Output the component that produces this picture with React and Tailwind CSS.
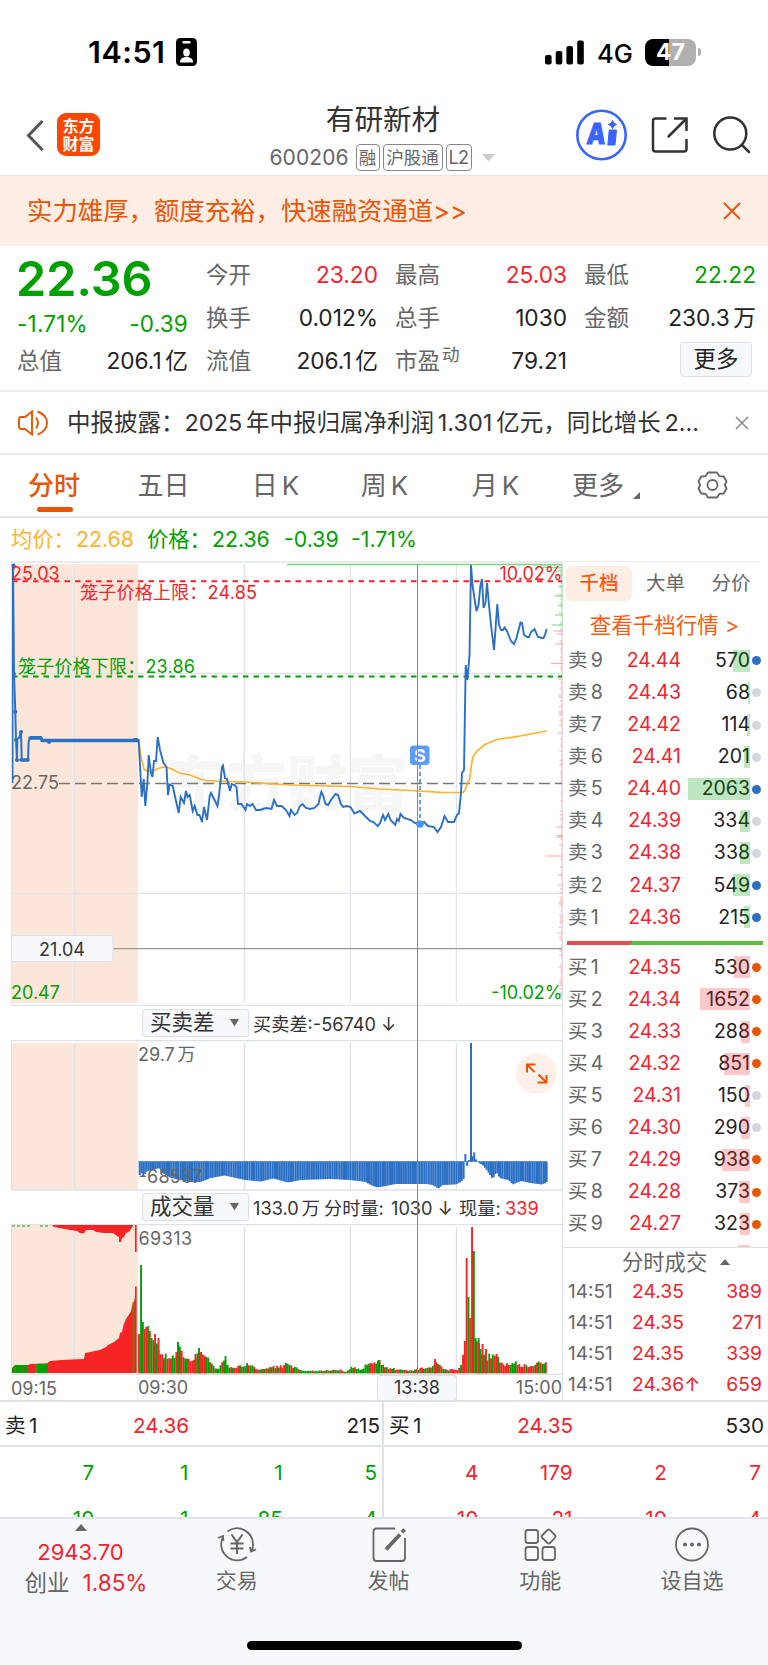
import React from 'react';

const PRICE_LINE = '138.7,740.7 141.7,797 143.7,779 145.3,806 147.5,781 148.7,755 151,773 152.5,777 154,761 156,761 157.7,737 160,750 163.5,763 166.5,767 168,795 169.5,784.5 172.7,786 176,801 178.7,813 180.7,797 184,803 186,791 187.5,797 189.7,795 192.7,811 194.7,806 197.5,815 199.5,815 202,822 204,807 207,820 209.7,796 211,793 213,797 217.5,806 219,796 222,767 223,765.5 225,778 227,779 230,791 231.7,784 234.5,785 236.5,787 238,804 241.5,804 245.5,810 247,804 250,806 252.5,804 256,810 260,810 266,808 271.5,809 274,800 277,806 281.5,806 286,810 289.5,816 291,810 294.5,815 297,813 300,806 302.5,804 306,808 310,809 314.5,808 318.5,804 320,797 321.3,792 323,795 325.5,804 328,805 331,800 335.5,794 338,795 341,804 343,807 346.7,806 350.5,807 354.5,813.5 360,811 365,816 370,821 373.5,822 377.7,826 380,823 383,815 385,820 388.3,814 390.5,820 395.3,825 397,819 398.7,821 400.5,814 404,818 411,820 415,823 420,824 424,822 428,826 434,827 437.5,832 441,827 444.5,816 448,822 454,822 457,815 459,813 461,793 462,773 463.5,771 464,770 465.7,665 467.5,680 469.5,655 471,565 472.5,585 474.7,600 476.5,611 478.5,605 480.5,585 482,579 483.5,608 485.5,603 487,583 489,605 491,625 494,650 497.3,604 499,625 501,630 503,630 504.5,627.5 507,631 511,641 514,644 516.5,638 520.5,622.5 522,623 524,635 527,637 529,637 531,632 534.5,629 538,637 542,638 543.5,638 545,635 546.7,629';

const AUCTION_LINE = '13,565 14,674 15.3,711.7 16,740 17,760 17.3,739 19,738 21,732 21.7,760 28,760 28.7,741 31,737 41,737 42,740.3 133,740.3 134,739 137,739 138.5,741';

const AVG_LINE = '138.7,740 141,757 144,769 147,771 153,771 158,768.5 163,767 167,767.5 172,769 179,773 190,775 200,779 206,780.5 215,781 245,782 290,785 350,786.5 380,789 420,791 440,792.3 463,792.5 465,790 468,782 469.5,780 471,768 472.7,757 477,751 485,744.5 497,739.5 520,736 546.7,731';

// [x, y] key points, the bars between them are interpolated
const DIFF_POINTS = [[139, 1175], [141, 1173], [143, 1178], [145, 1172], [150, 1170], [155, 1169], [158, 1168], [162, 1173], [170, 1178], [180, 1180], [190, 1182], [200, 1182], [210, 1178], [224, 1175.5], [235, 1178], [245, 1180], [260, 1181.5], [273, 1178.5], [287, 1182.5], [300, 1180], [330, 1179], [350, 1180], [365, 1182], [370, 1185], [377, 1187.5], [395, 1184], [425, 1184], [432, 1185], [437.5, 1188.5], [442, 1185], [455, 1184.5], [460, 1182], [463.9, 1178], [464, 1154], [466, 1154], [466.1, 1166], [468, 1165], [468.2, 1160], [471, 1160], [473, 1150], [475, 1159], [478, 1163], [482, 1165], [486, 1170], [492, 1179], [496, 1172], [499, 1178], [508, 1180], [512, 1184.5], [520, 1181], [530, 1183], [541, 1184.5], [545, 1183], [548, 1180]];

const VOL_POINTS = [[152, 1338], [154, 1348], [157, 1350], [162, 1357], [170, 1357], [175, 1355], [178, 1350], [182, 1352], [187, 1362], [193, 1362], [199, 1352], [203, 1357], [208, 1360], [213, 1367], [218, 1370], [223, 1363], [229, 1367], [235, 1368], [247, 1365], [255, 1368], [262, 1370], [275, 1367], [280, 1367], [286, 1365], [290, 1366], [297, 1369], [305, 1371], [320, 1371], [340, 1370], [346, 1372], [352, 1367], [360, 1370], [370, 1364], [379, 1362], [386, 1368], [400, 1370], [412, 1371], [420, 1369], [432, 1368], [437, 1363], [444, 1370], [457, 1370], [461, 1367], [463, 1355], [476, 1338], [478, 1344], [481, 1352], [484, 1352], [486, 1358], [492, 1357], [497, 1356], [500, 1364], [510, 1366], [515, 1363], [520, 1366], [530, 1366], [540, 1364], [548, 1361]];

const VOL_SPIKES = [[139, 1334, 'r'], [141, 1265, 'g'], [142.8, 1322, 'g'], [144.5, 1329, 'r'], [146.2, 1327, 'r'], [148, 1326, 'g'], [149.8, 1331, 'r'], [151.5, 1338, 'g'], [155, 1334, 'r'], [158.5, 1338, 'r'], [178, 1342, 'g'], [181, 1351, 'r'], [195.5, 1354, 'r'], [199, 1348, 'g'], [201, 1352, 'r'], [205, 1357, 'r'], [225.5, 1356, 'g'], [378.5, 1360, 'g'], [435, 1359, 'r'], [463, 1355, 'r'], [464.8, 1341, 'r'], [466.6, 1258, 'r'], [468.4, 1297, 'g'], [470.2, 1318, 'r'], [472, 1227, 'r'], [473.8, 1251, 'g'], [475.6, 1338, 'g'], [479, 1343, 'r'], [482.5, 1344, 'r'], [486, 1349, 'r'], [496.6, 1354, 'r']];

const AUCTION_VOL = '12,1373 12,1369 15,1365 28,1365 30,1364 47,1363.5 50,1361 62,1360 72,1359.5 84,1359 85,1353 90,1352 100,1350 106,1347 108,1345 114,1342 119,1338 120,1333 122,1332 123.5,1325 126,1319 130,1313 131,1311 132,1306 134,1301 135,1298 135,1286.5 136.7,1286.5 136.7,1373';

const AUCTION_TOP = '52,1225 54,1227 60,1228 64,1229 70,1230 77,1231 80,1233 84,1233.5 86,1230 93,1230 96,1232 104,1233 113,1233 117,1236 119,1237 119,1242 121,1242 122,1238 124,1237 126,1233 129,1232 131,1229 133,1226 133,1225';

const GRID_X = [74.5, 244.3, 350.4, 456.4];

const RED = '#f5222d';
const GREEN = '#00a000';
const BLUE = '#2b70c4';

function valueAt(points, x) {
  for (let i = 1; i < points.length; i++) {
    if (x <= points[i][0]) {
      const [x0, y0] = points[i - 1];
      const [x1, y1] = points[i];
      return y0 + ((y1 - y0) * (x - x0)) / (x1 - x0);
    }
  }
  return points[points.length - 1][1];
}

function noise(i) {
  const n = Math.sin(i * 127.1) * 43758.5453;
  return n - Math.floor(n);
}

// small gap between Chinese characters and latin letters / digits
function Mix({ text }) {
  const parts = text.split(/(?<=[\u4e00-\u9fa5])(?=[0-9A-Z])|(?<=[0-9A-Z])(?=[\u4e00-\u9fa5])/);
  return parts.map((p, i) => <span key={i} className={i > 0 ? 'ml-[0.16em]' : ''}>{p}</span>);
}

const sells = [
  ['卖9', '24.44', 570, 'b'],
  ['卖8', '24.43', 68, 'n'],
  ['卖7', '24.42', 114, 'n'],
  ['卖6', '24.41', 201, 'n'],
  ['卖5', '24.40', 2063, 'b'],
  ['卖4', '24.39', 334, 'n'],
  ['卖3', '24.38', 338, 'n'],
  ['卖2', '24.37', 549, 'b'],
  ['卖1', '24.36', 215, 'b'],
];

const buys = [
  ['买1', '24.35', 530, 'o'],
  ['买2', '24.34', 1652, 'o'],
  ['买3', '24.33', 288, 'o'],
  ['买4', '24.32', 851, 'o'],
  ['买5', '24.31', 150, 'n'],
  ['买6', '24.30', 290, 'n'],
  ['买7', '24.29', 938, 'o'],
  ['买8', '24.28', 373, 'o'],
  ['买9', '24.27', 323, 'o'],
];

const deals = [
  ['24.35', 389],
  ['24.35', 271],
  ['24.35', 339],
  ['24.36↑', 659],
];

const dotColor = { b: 'bg-[#2b70c4]', n: 'bg-[#d3d6de]', o: 'bg-[#ea5504]' };

function StatusBar() {
  return (
    <div className="flex h-[100px] shrink-0 items-start justify-between pl-[88px] pr-[67px] pt-[37px] text-black">
      <div className="flex h-[30px] items-center">
        <span className="w-[88px] text-[30.500px] font-semibold leading-none tracking-[0.500px]">14:51</span>
        <svg width="21" height="28" viewBox="0 0 21 28">
          <rect width="21" height="28" rx="4.5" fill="#000" />
          <rect x="6.5" y="3" width="8" height="2.5" rx="1.2" fill="#fff" />
          <ellipse cx="10.5" cy="14.5" rx="3.3" ry="3.9" fill="#fff" />
          <path d="M4 24.5c0-4 3-5.5 6.500-5.500s6.500 1.500 6.500 5.500z" fill="#fff" />
        </svg>
      </div>
      <div className="flex h-[30px] items-center">
        <svg width="39" height="25" viewBox="0 0 39 25">
          <rect x="0" y="15" width="6.600" height="9.500" rx="2" />
          <rect x="10.700" y="11" width="6.600" height="13.500" rx="2" />
          <rect x="21.400" y="6" width="6.600" height="18.500" rx="2" />
          <rect x="32.200" y="0.500" width="6.600" height="24" rx="2" />
        </svg>
        <span className="ml-[13px] w-[48px] pt-[3px] text-[25.500px] font-medium leading-none tracking-[-0.1px]">4G</span>
        <div className="flex h-[27px] w-[51px] items-center justify-center rounded-[8px] bg-[linear-gradient(90deg,#000_47%,#b0b0b0_47%)] text-[23px] font-bold leading-none text-white">
          47
        </div>
        <div className="ml-[2px] h-[8px] w-[3px] rounded-r-full bg-[#b0b0b0]" />
      </div>
    </div>
  );
}

function Header() {
  return (
    <div className="flex h-[75px] shrink-0 items-start">
      <div className="flex w-[218px] pl-[26px] pt-[13px]">
        <svg className="mt-[7px]" width="18" height="31" viewBox="0 0 18 31" fill="none" stroke="#555" strokeWidth="3">
          <path d="M16.500 1 2.500 15.500 16.500 30" />
        </svg>
        <div className="ml-[13px] flex h-[43px] w-[43px] flex-col items-center justify-center rounded-[9px] bg-[#ff4600] text-[16px] font-bold leading-[18px] text-white">
          <span>东方</span>
          <span>财富</span>
        </div>
      </div>
      <div className="flex w-[330px] flex-col items-center">
        <div className="mt-[4px] text-[28.600px] leading-[32px] text-[#333]">有研新材</div>
        <div className="mt-[8px] flex items-center pr-[2px] text-[17.500px] leading-none text-[#666]">
          <span className="mr-[6px] w-[80px] text-[21px] tracking-[0.100px]">600206</span>
          <span className="flex h-[27px] w-[24px] items-center justify-center rounded-[4px] border border-[#888]">融</span>
          <span className="ml-[3px] flex h-[27px] w-[60px] items-center justify-center rounded-[4px] border border-[#888]">沪股通</span>
          <span className="ml-[3px] flex h-[27px] w-[26px] items-center justify-center rounded-[4px] border border-[#888] text-[18px] tracking-[-0.5px]">L2</span>
          <svg className="ml-[10px]" width="13" height="8" viewBox="0 0 13 8">
            <path d="M0 0h13L6.500 7.500z" fill="#ccc" />
          </svg>
        </div>
      </div>
      <div className="flex w-[220px] items-center pl-[28px] pt-[9px]">
        <svg width="51" height="52" viewBox="0 0 51 52">
          <circle cx="25.500" cy="26" r="24.200" fill="none" stroke="#3964fe" strokeWidth="2.600" />
          <text x="13" y="35.500" transform="skewX(-5)" fontSize="29" fontWeight="900" fill="#3964fe" stroke="#3964fe" strokeWidth="0.800" textLength="19" lengthAdjust="spacingAndGlyphs">A</text>
          <path d="M33.300 21h7.200l-1.500 15h-7.200z" fill="#3964fe" stroke="#3964fe" strokeLinejoin="round" />
          <path d="M36.500 11.500q.9 3.200 4 4-3.100.9-4 4-.9-3.100-4-4 3.100-.8 4-4z" fill="#3964fe" stroke="#3964fe" strokeLinejoin="round" />
        </svg>
        <svg className="ml-6" width="38" height="38" viewBox="0 0 38 38" fill="none" stroke="#333" strokeWidth="2.500" strokeLinecap="round">
          <path d="M14.500 2.500H4.500a2.500 2.500 0 0 0-2.500 2.500V33a2.500 2.500 0 0 0 2.500 2.500H33a2.500 2.500 0 0 0 2.500-2.500V24" />
          <path d="M24 2.500h11.500V14M35 3 17.500 20.500" />
        </svg>
        <svg className="ml-[24px]" width="38" height="38" viewBox="0 0 38 38" fill="none" stroke="#333" strokeWidth="2.500" strokeLinecap="round">
          <circle cx="17.300" cy="17.500" r="16" />
          <path d="M29 29 36 36" />
        </svg>
      </div>
    </div>
  );
}

function Banner() {
  return (
    <div className="flex h-[71px] shrink-0 items-center justify-between border-t border-[#e8e4e2] bg-[#feede4] pl-[27px] pr-[27px] text-[#ea5504]">
      <span className="text-[25.400px] leading-none">实力雄厚，额度充裕，快速融资通道&gt;&gt;</span>
      <svg width="18" height="18" viewBox="0 0 18 18" stroke="currentColor" strokeWidth="1.800">
        <path d="M1 1 17 17M17 1 1 17" />
      </svg>
    </div>
  );
}

function Stat({ label, sup, value, color = 'text-[#222]' }) {
  return (
    <div className="flex h-[43px] items-center justify-between whitespace-nowrap leading-none">
      <span className="text-[22.500px] text-[#666]">
        {label}
        {sup && <sup className="ml-[2px] text-[17.500px]">{sup}</sup>}
      </span>
      <span className={`text-[22.700px] ${color}`}><Mix text={value} /></span>
    </div>
  );
}

function Quote() {
  return (
    <div className="flex h-[146px] shrink-0 border-b-2 border-[#eee] pl-[17px] pr-[12px] pt-[8px]">
      <div className="w-[171px] text-[#00a000]">
        <div className="flex h-[51px] items-center text-[48.500px] font-semibold leading-none">
          <span className="-ml-px">22.36</span>
        </div>
        <div className="-mt-[2px] flex h-[43px] items-center justify-between text-[22.500px] leading-none tracking-[0.200px]">
          <span>-1.71%</span>
          <span>-0.39</span>
        </div>
        <div className="-mt-[6px]">
          <Stat label="总值" value="206.1亿" />
        </div>
      </div>
      <div className="ml-[18px] w-[172px]">
        <Stat label="今开" value="23.20" color="text-[#f5222d]" />
        <Stat label="换手" value="0.012%" />
        <Stat label="流值" value="206.1亿" />
      </div>
      <div className="ml-[17px] w-[172px]">
        <Stat label="最高" value="25.03" color="text-[#f5222d]" />
        <Stat label="总手" value="1030" />
        <Stat label="市盈" sup="动" value="79.21" />
      </div>
      <div className="ml-[17px] w-[172px]">
        <Stat label="最低" value="22.22" color="text-[#00a000]" />
        <Stat label="金额" value="230.3万" />
        <div className="flex h-[39px] items-center justify-end pr-[4px]">
          <button className="h-[35px] w-[72px] rounded-[4px] border border-[#dcdfe4] bg-[#f7f8fb] text-[22.500px] leading-none text-[#222]">更多</button>
        </div>
      </div>
    </div>
  );
}

function News() {
  return (
    <div className="flex h-[63px] shrink-0 items-center border-b-2 border-[#eee] pl-[18px] pr-[19px]">
      <svg width="31" height="26" viewBox="0 0 31 26" fill="none" stroke="#ea5504" strokeWidth="1.900">
        <path d="M14 1.500v23L7 19H3a2 2 0 0 1-2-2V9a2 2 0 0 1 2-2h4zM18 7.500q4 5.500 0 11M19.500 1.500Q29 5 29 13t-9.500 11.500" />
      </svg>
      <span className="ml-[18px] flex-1 whitespace-nowrap text-[23.500px] leading-none text-[#333]">
        <Mix text="中报披露：2025年中报归属净利润1.301亿元，同比增长2..." />
      </span>
      <svg width="14" height="14" viewBox="0 0 14 14" stroke="#888" strokeWidth="1.500">
        <path d="M1 1 13 13M13 1 1 13" />
      </svg>
    </div>
  );
}

function Tabs() {
  return (
    <div className="flex h-[63px] shrink-0 border-b-2 border-[#e3e3ec] text-[26px] leading-[61px] text-[#666]">
      <div className="relative w-[109px] pl-[28px] font-medium text-[#ea5504]">
        分时
        <div className="absolute bottom-[4px] left-[37px] h-[5px] w-[36px] rounded-full bg-[#ea5504]" />
      </div>
      <div className="w-[109px] text-center">五日</div>
      <div className="w-[115px] text-center"><Mix text="日K" /></div>
      <div className="w-[103px] text-center"><Mix text="周K" /></div>
      <div className="w-[119px] text-center"><Mix text="月K" /></div>
      <div className="flex w-[110px] items-center pl-[17px]">
        更多
        <svg className="ml-[9px] mt-5" width="7" height="7" viewBox="0 0 7 7">
          <path d="M7 0v7H0z" fill="#666" />
        </svg>
      </div>
      <svg className="ml-[32px] mt-[16px]" width="31" height="28" viewBox="0 0 31 28" fill="none" stroke="#666" strokeWidth="1.800">
        <path d="M11 1.500h9l2.500 3.700 4.300.3 2.700 5-1.700 3.500 1.700 3.500-2.700 5-4.300.3-2.500 3.700h-9l-2.500-3.700-4.300-.3-2.700-5L3.200 14 1.500 10.500l2.700-5 4.300-.3z" strokeLinejoin="round" />
        <circle cx="15.500" cy="14" r="5" />
      </svg>
    </div>
  );
}

function PriceChart() {
  const ticks = [];
  for (let i = 0; i < 218; i++) {
    ticks.push([565 + i * 2, 1 + noise(i) * noise(i + 9) * 4]);
  }
  const longTicks = [[565, 29], [567.5, 20], [571, 8], [575, 6], [586, 4], [596, 8], [605.7, 5], [615, 8], [625, 11], [631, 9], [634, 6], [644, 7], [663.5, 11.5], [712, 4], [760, 3], [827, 7], [835.5, 5.5], [837, 6], [856, 17], [875, 4]];
  return (
    <svg className="shrink-0" width="563" height="445" viewBox="0 561 563 445">
      <rect x="11" y="564" width="127" height="439" fill="#fce6d9" />
      <g stroke="#e1e5eb" strokeWidth="1.300">
        <path d="M11 562H563M11 1005.500H563M11.500 562V1005M562.500 562V1006" />
        <path d="M11 673.700H562M11 893.300H562" />
        {GRID_X.map((x) => <path key={x} d={`M${x} 564V1003`} />)}
      </g>
      <text x="166" y="806" fontSize="60.500" fontWeight="900" fill="#f6f6f7">东方财富</text>
      <path d="M244.300 750V820M350.400 750V820" stroke="#e1e5eb" strokeWidth="1.300" />
      <path d="M287 564.500H562" stroke="#7fd67f" strokeWidth="1.300" />
      {ticks.concat(longTicks).map(([y, w], i) => (
        <path key={i} d={`M${562.5 - w} ${y}H562.500`} stroke={y < 630 ? '#8bd98b' : '#fbaeb2'} strokeWidth="1.100" />
      ))}
      <path d="M12 581.300H562" stroke={RED} strokeWidth="1.900" strokeDasharray="5.500 5" />
      <path d="M12 676.500H562" stroke={GREEN} strokeWidth="1.900" strokeDasharray="5.500 5" />
      <path d="M59 783.500H562" stroke="#777" strokeWidth="1.400" strokeDasharray="11 5" />
      <path d="M113 948.700H562" stroke="#999" strokeWidth="1.200" />
      <polyline points={AVG_LINE} fill="none" stroke="#fdb32b" strokeWidth="1.700" />
      <path d="M12.700 565V783" stroke={BLUE} strokeWidth="1.500" />
      <polyline points={AUCTION_LINE} fill="none" stroke={BLUE} strokeWidth="2" strokeLinejoin="round" />
      <path d="M30 738h11M42 740.500h96M21 760h7" stroke={BLUE} strokeWidth="3.600" strokeLinecap="round" />
      {[[13.5, 565.5], [14, 674], [15.3, 711.7], [17, 760], [21, 732], [16, 740], [49, 742]].map(([x, y]) => (
        <circle key={x} cx={x} cy={y} r="2" fill={BLUE} />
      ))}
      <polyline points={PRICE_LINE} fill="none" stroke={BLUE} strokeWidth="1.900" />
      <path d="M420 765V820" stroke="#5a9df8" strokeWidth="1.900" strokeDasharray="4 3" />
      <circle cx="420" cy="824" r="3.800" fill="#4a93f8" />
      <rect x="410" y="745.500" width="19.500" height="19.500" rx="3.500" fill="#5a9df8" />
      <text x="419.800" y="761.500" fontSize="18" fontWeight="700" fill="#fff" textAnchor="middle">S</text>
      <g fontSize="18">
        <text x="11" y="580" fill={RED}>25.03</text>
        <text x="80" y="599" fill={RED} textLength="177">笼子价格上限：24.85</text>
        <text x="18" y="673.300" fill={GREEN} textLength="177">笼子价格下限：23.86</text>
        <text x="11" y="789" fill="#666">22.75</text>
        <text x="11" y="999" fill={GREEN}>20.47</text>
        <text x="562.500" y="579.500" fill={RED} textAnchor="end">10.02%</text>
        <text x="562.500" y="999" fill={GREEN} textAnchor="end">-10.02%</text>
        <rect x="11.500" y="935.500" width="101.500" height="26" rx="2.500" fill="#f7f8fb" stroke="#dcdfe6" />
        <text x="62" y="955.500" fill="#333" textAnchor="middle">21.04</text>
      </g>
    </svg>
  );
}

function DiffChart() {
  const bars = [];
  for (let x = 139; x < 547; x += 1.77) {
    const y = valueAt(DIFF_POINTS, x);
    bars.push(
      <path key={x} d={`M${x + 0.7} 1161.500V${y}`} stroke={BLUE} strokeWidth={noise(x) > 0.6 ? 1.7 : 2} />
    );
  }
  return (
    <svg className="shrink-0" width="563" height="151" viewBox="0 1040 563 151">
      <rect x="11" y="1043" width="127" height="146" fill="#fce6d9" />
      <g stroke="#dde2e9" strokeWidth="1.300">
        <path d="M11 1040.700H563M11 1190H563M11.500 1040V1190M562.500 1040V1191" />
        {GRID_X.map((x) => <path key={x} d={`M${x} 1043V1189`} />)}
      </g>
      <path d="M138 1161.500H547" stroke="#8ab0dd" />
      {bars}
      <path d="M471 1161.500V1043" stroke={BLUE} strokeWidth="2" />
      <g fontSize="18" fill="#666">
        <text x="138" y="1060.500">29.7</text>
        <text x="177.500" y="1060.500">万</text>
        <text x="138.500" y="1183" textLength="64">-68537</text>
      </g>
      <circle cx="536.300" cy="1073.300" r="20.500" fill="#feefe8" />
      <path d="M527 1072.500V1064.500H535.500M527.500 1065 534.500 1072M546.500 1075V1082.500H537.500M546 1082 538.500 1074.500" fill="none" stroke="#ea5504" strokeWidth="2" />
    </svg>
  );
}

function VolumeChart() {
  const bars = [];
  for (let x = 153.3; x < 547; x += 1.768) {
    const n = noise(x);
    const base = valueAt(VOL_POINTS, x);
    const y = base + (n - 0.65) * (1373 - base) * 0.55;
    if (x > 462 && x < 476) continue;
    bars.push(
      <rect key={x} x={x - 0.9} y={y} width="1.900" height={1373.3 - y} fill={noise(x * 3) > (x < 240 || x > 420 ? 0.5 : 0.38) ? GREEN : '#f62424'} />
    );
  }
  return (
    <svg className="shrink-0" width="563" height="151" viewBox="0 1224 563 151">
      <rect x="11" y="1225" width="127" height="148" fill="#fce6d9" />
      <g stroke="#dde2e9" strokeWidth="1.300">
        <path d="M11 1224.700H563M11 1374.300H563M11.500 1224V1375M562.500 1224V1375" />
        {GRID_X.map((x) => <path key={x} d={`M${x} 1227V1373`} />)}
      </g>
      <polygon points={AUCTION_VOL} fill="#f62424" />
      <path d="M12 1373V1368L15 1365H28V1373z" fill={GREEN} />
      <path d="M15 1373V1366M22 1373V1366" stroke="#8a6a10" strokeWidth="1.500" />
      <rect x="38" y="1363.700" width="9.500" height="9.500" fill={GREEN} />
      <path d="M36.500 1373V1364M133.500 1373V1302" stroke="#5a8a10" strokeWidth="1.800" />
      <polygon points={AUCTION_TOP} fill="#f62424" />
      <path d="M135.800 1225V1252" stroke="#f62424" strokeWidth="1.700" />
      <path d="M12 1226H30M40 1226H48" stroke={GREEN} strokeWidth="1.500" strokeDasharray="3 2" opacity="0.600" />
      {bars}
      {VOL_SPIKES.map(([x, y, c]) => (
        <rect key={x} x={x - 0.9} y={y} width="1.900" height={1373.3 - y} fill={c === 'r' ? '#f62424' : GREEN} />
      ))}
      <text x="138.500" y="1244.500" fontSize="18" fill="#666" textLength="53.500">69313</text>
    </svg>
  );
}

function IndicatorRow({ name, children }) {
  return (
    <div className="flex h-[34px] shrink-0 items-center border-r border-[#e1e5eb] pl-[142px] text-[18.200px] leading-none text-[#333]">
      <div className="flex h-[28px] w-[107px] items-center justify-between rounded-[3px] border border-[#dcdfe6] bg-[#f7f8fb] pl-[7px] pr-[9px] text-[21.500px]">
        {name}
        <svg width="9" height="8" viewBox="0 0 9 8">
          <path d="M0 0h9L4.500 7.500z" fill="#666" />
        </svg>
      </div>
      <div className="ml-[4px] mt-[2px] flex whitespace-nowrap">{children}</div>
    </div>
  );
}

function Charts() {
  return (
    <div className="relative flex w-[563px] shrink-0 flex-col">
      <PriceChart />
      <IndicatorRow name="买卖差">买卖差:-56740 ↓</IndicatorRow>
      <DiffChart />
      <div className="-mt-px flex flex-col">
        <IndicatorRow name="成交量">
          <span className="w-[71px]"><Mix text="133.0万" /></span>
          <span className="w-[67px]">分时量:</span>
          <span className="w-[68px]">1030 ↓</span>
          <span className="w-[46px]">现量:</span>
          <span className="text-[#f5222d]">339</span>
        </IndicatorRow>
      </div>
      <VolumeChart />
      <div className="flex h-[26px] items-center border-r border-[#e1e5eb] pl-[11px] text-[18px] leading-none text-[#666]">
        <span className="h-full w-[127px] border-r border-[#eef0f3] pt-[5px]">09:15</span>
        <span className="w-[239px]">09:30</span>
        <span className="flex h-[26px] w-[80px] items-center justify-center rounded-[3px] border border-[#dcdfe6] bg-[#f7f8fb] text-[#333]">13:38</span>
        <span className="flex-1 text-right">15:00</span>
      </div>
      <div className="absolute left-[417px] top-[3px] h-[810px] w-px bg-[#888]" />
    </div>
  );
}

function BookRow({ row, side }) {
  const [label, price, vol, dot] = row;
  return (
    <div className="flex h-[32.100px] items-center pl-[5px] text-[19.500px] leading-none">
      <span className="w-[43px] text-[#666]">
        <Mix text={label} />
      </span>
      <span className="w-[70px] text-right text-[#f5222d]">{price}</span>
      <div className="relative flex h-[22px] w-[69px] items-center justify-end">
        <span className="text-[#222]">{vol}</span>
        <div
          className={`absolute right-0 top-0 h-full ${side === 'sell' ? 'bg-[#00a000]/25' : 'bg-[#f5222d]/25'}`}
          style={{ width: vol / 33 }}
        />
      </div>
      <span className={`ml-[2px] size-[9px] rounded-full ${dotColor[dot]}`} />
    </div>
  );
}

function OrderBook() {
  return (
    <div className="flex w-[205px] shrink-0 flex-col">
      <div className="mr-[8px] flex h-[41px] items-center border-t border-[#e8eaee] pl-[3px] pt-[3px] text-[19.500px] leading-none text-[#666]">
        <span className="flex h-[35px] w-[66px] items-center justify-center rounded-[6px] bg-[#feede4] font-medium text-[#fb5a0c]">千档</span>
        <span className="w-[66px] pl-[1px] text-center">大单</span>
        <span className="flex-1 pl-[4px] text-center">分价</span>
      </div>
      <div className="flex h-[43px] items-center justify-center pr-0.5 pt-[5px] text-[21.500px] leading-none text-[#fb5a0c]">
        查看千档行情&nbsp;&gt;
      </div>
      {sells.map((r) => <BookRow key={r[0]} row={r} side="sell" />)}
      <div className="ml-[4px] mr-[5px] mt-[7.500px] h-[4.500px] shrink-0 bg-[linear-gradient(120deg,#e84b4b_33%,#5bbf3f_33%)]" />
      <div className="mt-[6px]">
        {buys.map((r) => <BookRow key={r[0]} row={r} side="buy" />)}
      </div>
      <div className="mr-[18px] mt-[5px] h-[2px] w-[12px] self-end bg-[#f5222d]/25" />
      <div className="flex h-[29px] items-center border-t border-[#dcdfe6] pl-[59px] text-[21.300px] leading-none text-[#666]">
        分时成交
        <svg className="ml-[13px]" width="10" height="6" viewBox="0 0 10 6">
          <path d="M5 0 10 6H0z" fill="#666" />
        </svg>
      </div>
      {deals.map(([price, vol], i) => (
        <div key={i} className="flex h-[31px] items-center pl-[5px] pr-[6px] text-[19.300px] leading-none text-[#f5222d]">
          <span className="w-[64px] text-[19px] text-[#666]">14:51</span>
          <span className="flex-1">{price}</span>
          <span>{vol}</span>
        </div>
      ))}
    </div>
  );
}

function DepthHalf({ label, price, vol, first, second, color }) {
  return (
    <div className="w-1/2 text-[20.700px] leading-none">
      <div className="flex h-[45px] items-center border-b-2 border-[#dfe1e8] pl-[5px] pr-[4px] pt-[6px] text-[#222]">
        <span className="w-[84px]"><Mix text={label} /></span>
        <span className="w-[100px] text-right text-[#f5222d]">{price}</span>
        <span className="flex-1 text-right">{vol}</span>
      </div>
      <div className={color}>
        {[first, second].map((cells, i) => (
          <div key={i} className="flex h-[46px] items-center pr-[7px] pt-[6px]">
            {cells.map((c, j) => <span key={j} className="flex-1 text-right">{c}</span>)}
          </div>
        ))}
      </div>
    </div>
  );
}

function NavItem({ label, children }) {
  return (
    <div className="flex w-[151.700px] flex-col items-center pt-[6px] text-[21px] leading-none text-[#666]">
      <svg width="40" height="38" viewBox="0 0 40 38" fill="none" stroke="#666" strokeWidth="1.800">{children}</svg>
      <span className="mt-[7px]">{label}</span>
    </div>
  );
}

function BottomNav() {
  return (
    <div className="flex h-[148px] shrink-0 flex-col items-center justify-between border-t-2 border-[#e3e4e9] bg-[#f7f8fb] pb-[15px]">
      <div className="flex w-full">
        <div className="flex w-[161px] flex-col items-center pt-[5px] leading-none text-[#f5222d]">
          <svg width="12" height="7" viewBox="0 0 12 7">
            <path d="M6 0 12 7H0z" fill="#666" />
          </svg>
          <span className="mt-[10px] text-[22px]">2943.70</span>
          <div className="mt-[9px] flex items-center pl-[11px] text-[22.500px]">
            <span className="mr-[13px] text-[#666]">创业</span>
            <span>1.85%</span>
          </div>
        </div>
        <NavItem label="交易">
          <path d="M10.500 6.500A16 16 0 0 1 36 19.500q0 3-1 6M30 32A16 16 0 0 1 6 12M1 13l5-2 .5 5M39 24.500l-5 2-1-4.500" />
          <path d="M14.500 9.500 20 17l5.500-7.500M20 17v12M13.500 18.500h13M13.500 23.500h13" strokeWidth="2" />
        </NavItem>
        <NavItem label="发帖">
          <path d="M26 3.500H7.500a3 3 0 0 0-3 3V33a3 3 0 0 0 3 3H33a3 3 0 0 0 3-3V13" />
          <path d="M17 24.500 31 9.500" strokeWidth="3.800" />
          <path d="M33 7.200 35.500 4.500" strokeWidth="3.600" />
        </NavItem>
        <NavItem label="功能">
          <rect x="5.500" y="5" width="12.500" height="13" rx="2.500" />
          <rect x="5.500" y="22" width="12.500" height="13" rx="2.500" />
          <rect x="22.500" y="22" width="12.500" height="13" rx="2.500" />
          <path d="M27.500 5 22 10.500q-1 1 0 2l5.500 5.500q1.200 1 2.400 0l5.300-5.500q1-1 0-2L29.900 5q-1.200-1-2.400 0z" />
        </NavItem>
        <NavItem label="设自选">
          <circle cx="20" cy="19.500" r="16" />
          <g fill="#666" stroke="none">
            <circle cx="13" cy="19.500" r="2" />
            <circle cx="20" cy="19.500" r="2" />
            <circle cx="27" cy="19.500" r="2" />
          </g>
        </NavItem>
      </div>
      <div className="h-[9px] w-[275px] rounded-full bg-black" />
    </div>
  );
}

export default function App() {
  return (
    <div lang="zh-CN" className="flex h-[1665px] w-[768px] flex-col overflow-hidden bg-white [font-family:Inter,'Noto_Sans_CJK_SC',sans-serif]">
      <StatusBar />
      <Header />
      <Banner />
      <Quote />
      <News />
      <Tabs />
      <div className="flex h-[43px] shrink-0 items-center whitespace-nowrap pl-[11px] pt-[1px] text-[21.300px] leading-none text-[#00a000]">
        <span className="w-[136px] text-[#fdb32b]">均价：<span className="ml-px">22.68</span></span>
        <span className="w-[137px]">价格：<span className="ml-px">22.36</span></span>
        <span className="w-[67px]">-0.39</span>
        <span>-1.71%</span>
      </div>
      <div className="flex h-[841px] shrink-0 border-b-2 border-[#dfe1e8]">
        <Charts />
        <OrderBook />
      </div>
      <div className="relative flex h-[115px] shrink-0 overflow-hidden">
        <DepthHalf label="卖1" price="24.36" vol="215" color="text-[#00a000]" first={[7, 1, 1, 5]} second={[10, 1, 85, 4]} />
        <div className="absolute left-[382px] top-0 h-full w-[2px] bg-[#dfe1e8]" />
        <DepthHalf label="买1" price="24.35" vol="530" color="text-[#f5222d]" first={[4, 179, 2, 7]} second={[10, 21, 10, 4]} />
      </div>
      <BottomNav />
    </div>
  );
}
